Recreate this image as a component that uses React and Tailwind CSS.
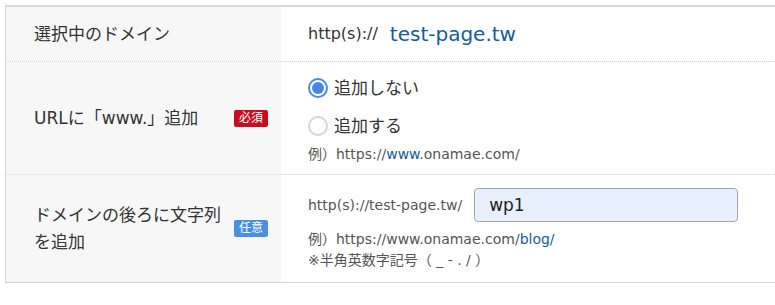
import { useState } from "react";

const font = { fontFamily: '"DejaVu Sans", "Noto Sans CJK JP", sans-serif' };

function Badge({ kind }) {
  const required = kind === "required";
  return (
    <span
      className={`block shrink-0 rounded-[2px] px-[5px] text-[12px] leading-[17px] text-white ${
        required ? "bg-[#c70d1f]" : "bg-[#4a8ee6]"
      }`}
    >
      {required ? "必須" : "任意"}
    </span>
  );
}

function Radio({ checked, label, onClick }) {
  return (
    <label className="flex h-6 cursor-pointer items-center gap-[6px]" onClick={onClick}>
      <span
        className={`flex h-[20px] w-[20px] items-center justify-center rounded-full border-2 bg-white ${
          checked ? "border-[#4d87e8]" : "border-[#d6d6d6]"
        }`}
      >
        {checked && <span className="h-[12px] w-[12px] rounded-full bg-[#4a86ea]" />}
      </span>
      <span className="text-[17px] leading-6 text-[#333]">{label}</span>
    </label>
  );
}

export default function App() {
  const [www, setWww] = useState(false);
  const [path, setPath] = useState("wp1");

  return (
    <div className="h-[305px] w-[775px] bg-white pl-[5px] pt-[5px]" style={font}>
      <div className="border-b border-l border-t-2 border-[#d9d9d9] border-b-[#d4d4d4]">
        {/* 選択中のドメイン */}
        <div className="flex h-[55px] border-b border-dotted border-[#cfcfcf]">
          <div className="flex w-[275px] shrink-0 items-center bg-[#f7f7f7] pl-[28px]">
            <span className="text-[17px] leading-6 text-[#333]">選択中のドメイン</span>
          </div>
          <div className="flex items-center pl-[27px]">
            <span className="text-[16px] leading-6 text-[#333]">http(s)://</span>
            <span className="ml-[12px] text-[20px] leading-6 text-[#155c99]">test-page.tw</span>
          </div>
        </div>

        {/* www */}
        <div className="flex h-[113px] border-b border-dotted border-[#cfcfcf]">
          <div className="flex w-[275px] shrink-0 items-center bg-[#f7f7f7] pl-[28px] pr-[13px]">
            <span className="text-[17px] leading-6 text-[#333]">URLに「www.」追加</span>
            <span className="ml-auto">
              <Badge kind="required" />
            </span>
          </div>
          <div className="flex flex-col pl-[27px] pt-[14px]">
            <Radio checked={!www} label="追加しない" onClick={() => setWww(false)} />
            <div className="mt-[14px]">
              <Radio checked={www} label="追加する" onClick={() => setWww(true)} />
            </div>
            <p className="mt-[6px] text-[14px] leading-[20px] text-[#555]">
              例）https://<span className="text-[#155c99]">www</span>.onamae.com/
            </p>
          </div>
        </div>

        {/* 文字列 */}
        <div className="flex h-[107px]">
          <div className="flex w-[275px] shrink-0 items-center bg-[#f7f7f7] pl-[28px] pr-[13px]">
            <span className="w-[190px] text-[17px] leading-[27px] text-[#333]">
              ドメインの後ろに文字列を追加
            </span>
            <span className="ml-auto">
              <Badge kind="optional" />
            </span>
          </div>
          <div className="flex flex-col pl-[27px] pt-[13px]">
            <div className="flex items-center gap-[12px]">
              <span className="text-[14px] leading-5 text-[#555]">http(s)://test-page.tw/</span>
              <input
                value={path}
                onChange={(e) => setPath(e.target.value)}
                className="h-[34px] w-[264px] rounded-[4px] border border-[#a6a6a6] bg-[#e8f0fe] px-[14px] text-[17px] text-[#222] outline-none"
                style={font}
              />
            </div>
            <p className="mt-[7px] text-[14px] leading-[21px] text-[#555]">
              例）https://www.onamae.com/<span className="text-[#155c99]">blog/</span>
            </p>
            <p className="text-[14px] leading-[21px] text-[#555]">※半角英数字記号（ _ - . / ）</p>
          </div>
        </div>
      </div>
    </div>
  );
}
